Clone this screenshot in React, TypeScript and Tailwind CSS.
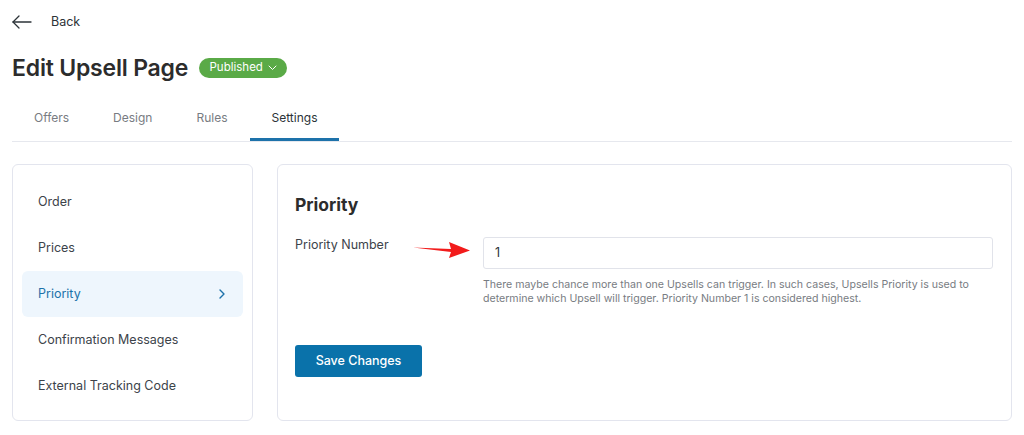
import React from "react";

const items = ["Order", "Prices", "Priority", "Confirmation Messages", "External Tracking Code"];
const tabs = ["Offers", "Design", "Rules", "Settings"];

export default function App() {
  return (
    <div className="w-[1024px] h-[435px] bg-white overflow-hidden px-3 pt-[1px] text-[#3c434a]" style={{ fontFamily: "Inter, 'Noto Sans', sans-serif" }}>
      {/* Back */}
      <div className="h-[42px] flex items-center">
        <svg width="20" height="14" viewBox="0 0 20 14" fill="none" stroke="#2c3338" strokeWidth="1.3" strokeLinecap="round" strokeLinejoin="round">
          <path d="M1 7H19" />
          <path d="M7 1L1 7L7 13" />
        </svg>
        <span className="ml-[19px] text-[12.5px] text-[#2c3338]">Back</span>
      </div>
      {/* Title */}
      <div className="mt-[13px] h-[24px] flex items-center">
        <h1 className="text-[23px] font-semibold tracking-[-0.2px] text-[#2c2c2c] leading-none">Edit Upsell Page</h1>
        <div className="ml-[11px] h-[20px] w-[88px] rounded-full bg-[#5aaa47] flex items-center justify-center gap-[5px] text-white text-[11.5px]">
          Published
          <svg width="9" height="6" viewBox="0 0 9 6" fill="none" stroke="white" strokeWidth="1" strokeLinecap="round">
            <path d="M1 1L4.5 4.5L8 1" />
          </svg>
        </div>
      </div>
      {/* Tabs */}
      <div className="mt-[17px] flex border-b border-[#e6e8ee]">
        {tabs.map((t) => (
          <div
            key={t}
            className={
              "h-[44px] px-[22px] flex items-center text-[12px] border-b-[3px] " +
              (t === "Settings" ? "border-[#1d72aa] text-[#2c3338]" : "border-transparent text-[#787c82]")
            }
          >
            {t}
          </div>
        ))}
      </div>
      {/* Body */}
      <div className="mt-[22px] flex gap-[24px]">
        <div className="w-[241px] h-[257px] rounded-[6px] border border-[#e3e5ee] px-[9px] pt-[14px] pb-[12px] flex flex-col">
          {items.map((it) => (
            <div
              key={it}
              className={
                "h-[46px] shrink-0 rounded-[6px] flex items-center justify-between pl-[16px] pr-[18px] text-[12.5px] " +
                (it === "Priority" ? "bg-[#eef6fd] text-[#1d72aa]" : "text-[#3c434a]")
              }
            >
              <span>{it}</span>
              {it === "Priority" && (
                <svg width="6" height="10" viewBox="0 0 6 10" fill="none" stroke="#1d72aa" strokeWidth="1.4" strokeLinecap="round" strokeLinejoin="round">
                  <path d="M1 1L5 5L1 9" />
                </svg>
              )}
            </div>
          ))}
        </div>
        <div className="flex-1 h-[257px] rounded-[6px] border border-[#e3e5ee] pl-[17px] pr-[18px] pt-[28px]">
          <h2 className="text-[17.5px] font-bold leading-[24px] text-[#2c2c2c]">Priority</h2>
          <div className="mt-[20px] flex">
            <div className="w-[188px] shrink-0 relative">
              <div className="text-[12.5px] leading-[16px] text-[#3c434a]">Priority Number</div>
              <svg className="absolute left-[118px] top-[4px]" width="58" height="18" viewBox="0 0 58 18">
                <path d="M0 6.5 L38 8 L36 1 L57 9.5 L36 17 L38 11 Z" fill="#f21b1b" />
              </svg>
            </div>
            <div className="flex-1">
              <div className="h-[32px] rounded-[3px] border border-[#e1e3ea] flex items-center pl-[11px] text-[12.5px] text-[#2c3338]">
                1
              </div>
              <p className="mt-[9px] text-[10.6px] leading-[14px] text-[#787c82]">
                There maybe chance more than one Upsells can trigger. In such cases, Upsells Priority is used to
                <br />
                determine which Upsell will trigger. Priority Number 1 is considered highest.
              </p>
            </div>
          </div>
          <button className="mt-[39px] h-[32px] w-[127px] rounded-[3px] bg-[#0a72aa] text-white text-[12.5px] font-medium">
            Save Changes
          </button>
        </div>
      </div>
    </div>
  );
}
